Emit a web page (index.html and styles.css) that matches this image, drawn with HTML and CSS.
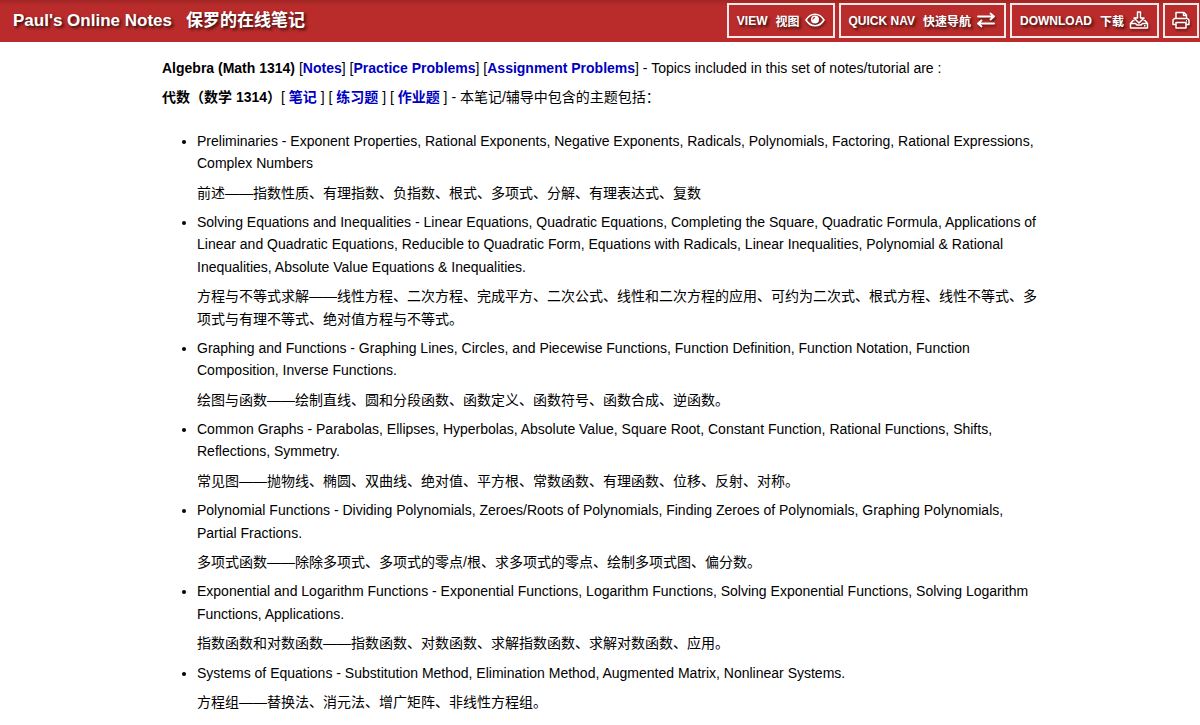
FILE: index.html
```
<!DOCTYPE html>
<html lang="zh-CN">
<head>
  <meta charset="UTF-8">
  <meta name="viewport" content="width=device-width, initial-scale=1.0">
  <title>Paul's Online Notes</title>
  <link rel="stylesheet" href="styles.css">
</head>
<body>
  <header class="header">
    <div class="site-title"><span>Paul's Online Notes</span><span>保罗的在线笔记</span></div>
    <nav class="header-menu">
      <button class="menu-button" type="button">
        <span>VIEW</span><span class="zh">视图</span>
        <svg class="icon" viewBox="0 0 20 20" fill="none" stroke="currentColor" stroke-width="1.600">
          <path d="M1 9C3.500 5 6.500 3.200 10 3.200S16.500 5 19 9c-2.500 4-5.500 5.800-9 5.800S3.500 13 1 9z"></path>
          <circle cx="10" cy="8.500" r="4" fill="currentColor" stroke="none"></circle>
          <path d="M7.800 8.500c.2-1.300 1-2 2.200-2.200" stroke="#b92c2b" stroke-width="1.200"></path>
        </svg>
      </button>
      <button class="menu-button" type="button">
        <span>QUICK NAV</span><span class="zh">快速导航</span>
        <svg class="icon" viewBox="0 0 20 20" fill="none" stroke="currentColor" stroke-width="1.800" stroke-linecap="round" stroke-linejoin="round">
          <path d="M2 5.500h16M14.500 2.500l3.500 3-3.500 3"></path>
          <path d="M18 12.500H2M5.500 9.500L2 12.500l3.500 3"></path>
        </svg>
      </button>
      <button class="menu-button" type="button">
        <span>DOWNLOAD</span><span class="zh">下载</span>
        <svg class="icon" viewBox="0 0 20 20" fill="none" stroke="currentColor" stroke-width="1.500" stroke-linejoin="round">
          <path d="M8.500 1h3v6h3.500L10 12 5 7h3.500z"></path>
          <path d="M5.500 9.500H4L1.500 12.500v4.500h17v-4.500L16 9.500h-1.500M1.500 12.500h5L8 14h4l1.500-1.500h5"></path>
          <path d="M15 14.800h1.500"></path>
        </svg>
      </button>
      <button class="menu-button print" type="button" aria-label="Print">
        <svg class="icon" viewBox="0 0 20 20" fill="none" stroke="currentColor" stroke-width="1.500" stroke-linejoin="round">
          <path d="M5 7.500V1.500h8L15.500 4v3.500M12.500 1.500v3h3"></path>
          <path d="M5 13.500H2V9l1.500-1.500h13L18 9v4.500h-3"></path>
          <path d="M5 11.500h10V17H5z"></path>
          <path d="M15 9.800h1"></path>
        </svg>
      </button>
    </nav>
  </header>

  <main class="content">
    <p><strong>Algebra (Math 1314)</strong> [<a href="#notes">Notes</a>] [<a href="#practice">Practice Problems</a>] [<a href="#assignment">Assignment Problems</a>] - Topics included in this set of notes/tutorial are :</p>
    <p><strong>代数（数学 1314）</strong>[ <a href="#notes">笔记</a> ] [ <a href="#practice">练习题</a> ] [ <a href="#assignment">作业题</a> ] - 本笔记/辅导中包含的主题包括：</p>

    <ul class="topics">
      <li>Preliminaries - Exponent Properties, Rational Exponents, Negative Exponents, Radicals, Polynomials, Factoring, Rational Expressions, Complex Numbers
        <p>前述——指数性质、有理指数、负指数、根式、多项式、分解、有理表达式、复数</p>
      </li>
      <li>Solving Equations and Inequalities - Linear Equations, Quadratic Equations, Completing the Square, Quadratic Formula, Applications of Linear and Quadratic Equations, Reducible to Quadratic Form, Equations with Radicals, Linear Inequalities, Polynomial &amp; Rational Inequalities, Absolute Value Equations &amp; Inequalities.
        <p>方程与不等式求解——线性方程、二次方程、完成平方、二次公式、线性和二次方程的应用、可约为二次式、根式方程、线性不等式、多项式与有理不等式、绝对值方程与不等式。</p>
      </li>
      <li>Graphing and Functions - Graphing Lines, Circles, and Piecewise Functions, Function Definition, Function Notation, Function Composition, Inverse Functions.
        <p>绘图与函数——绘制直线、圆和分段函数、函数定义、函数符号、函数合成、逆函数。</p>
      </li>
      <li>Common Graphs - Parabolas, Ellipses, Hyperbolas, Absolute Value, Square Root, Constant Function, Rational Functions, Shifts, Reflections, Symmetry.
        <p>常见图——抛物线、椭圆、双曲线、绝对值、平方根、常数函数、有理函数、位移、反射、对称。</p>
      </li>
      <li>Polynomial Functions - Dividing Polynomials, Zeroes/Roots of Polynomials, Finding Zeroes of Polynomials, Graphing Polynomials, Partial Fractions.
        <p>多项式函数——除除多项式、多项式的零点/根、求多项式的零点、绘制多项式图、偏分数。</p>
      </li>
      <li>Exponential and Logarithm Functions - Exponential Functions, Logarithm Functions, Solving Exponential Functions, Solving Logarithm Functions, Applications.
        <p>指数函数和对数函数——指数函数、对数函数、求解指数函数、求解对数函数、应用。</p>
      </li>
      <li>Systems of Equations - Substitution Method, Elimination Method, Augmented Matrix, Nonlinear Systems.
        <p>方程组——替换法、消元法、增广矩阵、非线性方程组。</p>
      </li>
    </ul>
  </main>
</body>
</html>
```

FILE: styles.css
```
:root {
  --red: #b92c2b;
  --red-dark: #a02524;
  --link: #0000c0;
}

* {
  box-sizing: border-box;
}

body {
  margin: 0;
  background-color: white;
  color: #000;
  font-family: "Liberation Sans", Arial, "Noto Sans CJK SC", sans-serif;
  font-size: 14px;
  line-height: 1.6;
}

.header {
  display: flex;
  align-items: center;
  justify-content: space-between;
  height: 42px;
  padding: 0 1px 1px 13px;
  background: linear-gradient(var(--red-dark), var(--red) 6px);
  color: white;
  text-shadow: 2px 2px 3px rgba(0, 0, 0, 0.7);
}

.site-title {
  display: flex;
  gap: 14px;
  font-size: 17px;
  font-weight: bold;
}

.header-menu {
  display: flex;
  gap: 4px;
}

.menu-button {
  display: flex;
  align-items: center;
  height: 35px;
  padding: 0 8px;
  background: none;
  border: 2px solid #fbe9e9;
  color: white;
  font: bold 12px "Liberation Sans", Arial, "Noto Sans CJK SC", sans-serif;
  text-shadow: inherit;
  cursor: pointer;
}

.menu-button .zh {
  margin: 0 5px 0 8px;
}

.icon {
  width: 20px;
  height: 20px;
  filter: drop-shadow(1px 2px 1px rgba(0, 0, 0, 0.5));
}

.menu-button.print {
  padding: 0 6px;
}

.content {
  width: 73%;
  margin: 0 auto;
  padding-top: 15px;
}

.content p {
  margin: 0 0 7px;
}

.content a {
  color: var(--link);
  font-weight: bold;
  text-decoration: none;
}

.topics {
  margin: 21px 0 0;
  padding-left: 35px;
}

.topics p {
  margin: 7px 0;
}
```
